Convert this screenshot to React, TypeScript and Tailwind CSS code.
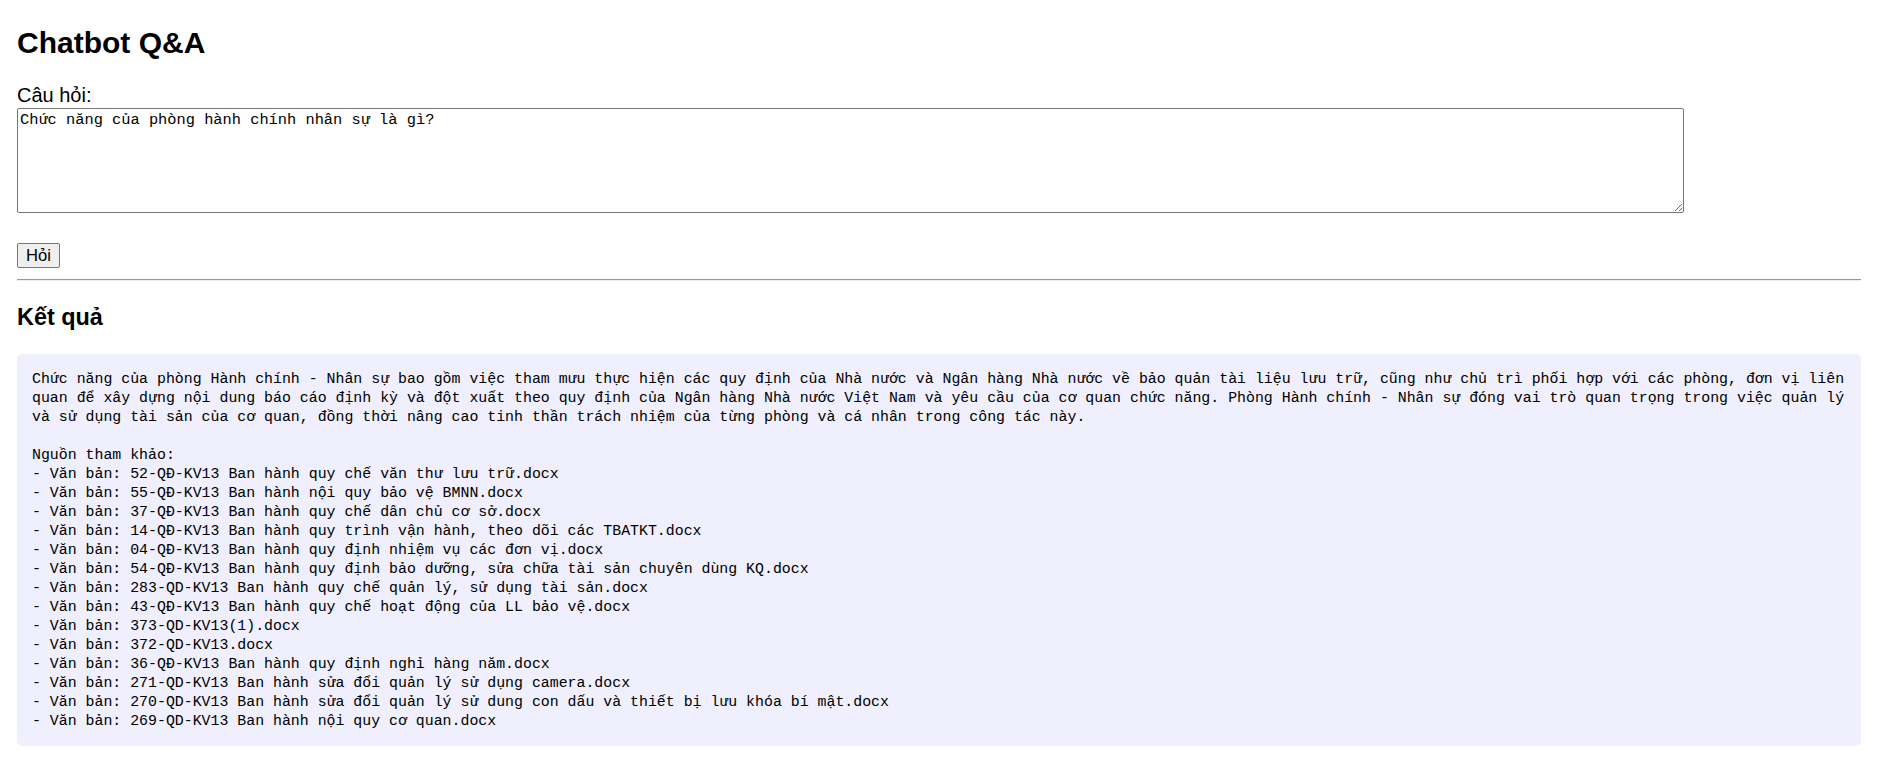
const answerLines = [
  "Chức năng của phòng Hành chính - Nhân sự bao gồm việc tham mưu thực hiện các quy định của Nhà nước và Ngân hàng Nhà nước về bảo quản tài liệu lưu trữ, cũng như chủ trì phối hợp với các phòng, đơn vị liên",
  "quan để xây dựng nội dung báo cáo định kỳ và đột xuất theo quy định của Ngân hàng Nhà nước Việt Nam và yêu cầu của cơ quan chức năng. Phòng Hành chính - Nhân sự đóng vai trò quan trọng trong việc quản lý",
  "và sử dụng tài sản của cơ quan, đồng thời nâng cao tinh thần trách nhiệm của từng phòng và cá nhân trong công tác này.",
  "",
  "Nguồn tham khảo:",
  "- Văn bản: 52-QĐ-KV13 Ban hành quy chế văn thư lưu trữ.docx",
  "- Văn bản: 55-QĐ-KV13 Ban hành nội quy bảo vệ BMNN.docx",
  "- Văn bản: 37-QĐ-KV13 Ban hành quy chế dân chủ cơ sở.docx",
  "- Văn bản: 14-QĐ-KV13 Ban hành quy trình vận hành, theo dõi các TBATKT.docx",
  "- Văn bản: 04-QĐ-KV13 Ban hành quy định nhiệm vụ các đơn vị.docx",
  "- Văn bản: 54-QĐ-KV13 Ban hành quy định bảo dưỡng, sửa chữa tài sản chuyên dùng KQ.docx",
  "- Văn bản: 283-QD-KV13 Ban hành quy chế quản lý, sử dụng tài sản.docx",
  "- Văn bản: 43-QĐ-KV13 Ban hành quy chế hoạt động của LL bảo vệ.docx",
  "- Văn bản: 373-QD-KV13(1).docx",
  "- Văn bản: 372-QD-KV13.docx",
  "- Văn bản: 36-QĐ-KV13 Ban hành quy định nghỉ hàng năm.docx",
  "- Văn bản: 271-QD-KV13 Ban hành sửa đổi quản lý sử dụng camera.docx",
  "- Văn bản: 270-QD-KV13 Ban hành sửa đổi quản lý sử dung con dấu và thiết bị lưu khóa bí mật.docx",
  "- Văn bản: 269-QD-KV13 Ban hành nội quy cơ quan.docx",
];

export default function App() {
  return (
    <div className="min-h-[765px] bg-white px-[17px] font-['Liberation_Sans',Arial,sans-serif] text-black">
      <h1 className="pt-[26px] text-[30px] font-bold leading-[34px]">Chatbot Q&amp;A</h1>

      <label className="mt-[24px] block text-[20px] leading-[23px]">Câu hỏi:</label>
      <textarea
        className="mt-[1px] block h-[105px] w-[1667px] resize-y rounded-[2px] border border-[#767676] bg-white px-[2px] py-[2px] font-['Liberation_Mono',monospace] text-[15.35px] leading-[19.5px] text-black outline-none"
        defaultValue="Chức năng của phòng hành chính nhân sự là gì?"
      />

      <button
        type="button"
        className="mt-[30px] block h-[25px] rounded-[2px] border border-[#767676] bg-[#efefef] px-[8px] text-[16.6px] leading-[19px] text-black"
      >
        Hỏi
      </button>

      <hr className="mt-[11px] w-[1844px] border-t border-b border-t-[#9a9a9a] border-b-[#eeeeee]" />

      <h3 className="mt-[23px] text-[23.4px] font-bold leading-[27px]">Kết quả</h3>

      <div className="mt-[23px] w-[1844px] rounded-[5px] bg-[#efeffd] pt-[16px] pb-[15px] pl-[15px] pr-[15px] font-['Liberation_Mono',monospace] text-[14.88px] leading-[19px]">
        {answerLines.map((line, i) => (
          <div key={i} className="h-[19px] whitespace-pre">
            {line}
          </div>
        ))}
      </div>
    </div>
  );
}
